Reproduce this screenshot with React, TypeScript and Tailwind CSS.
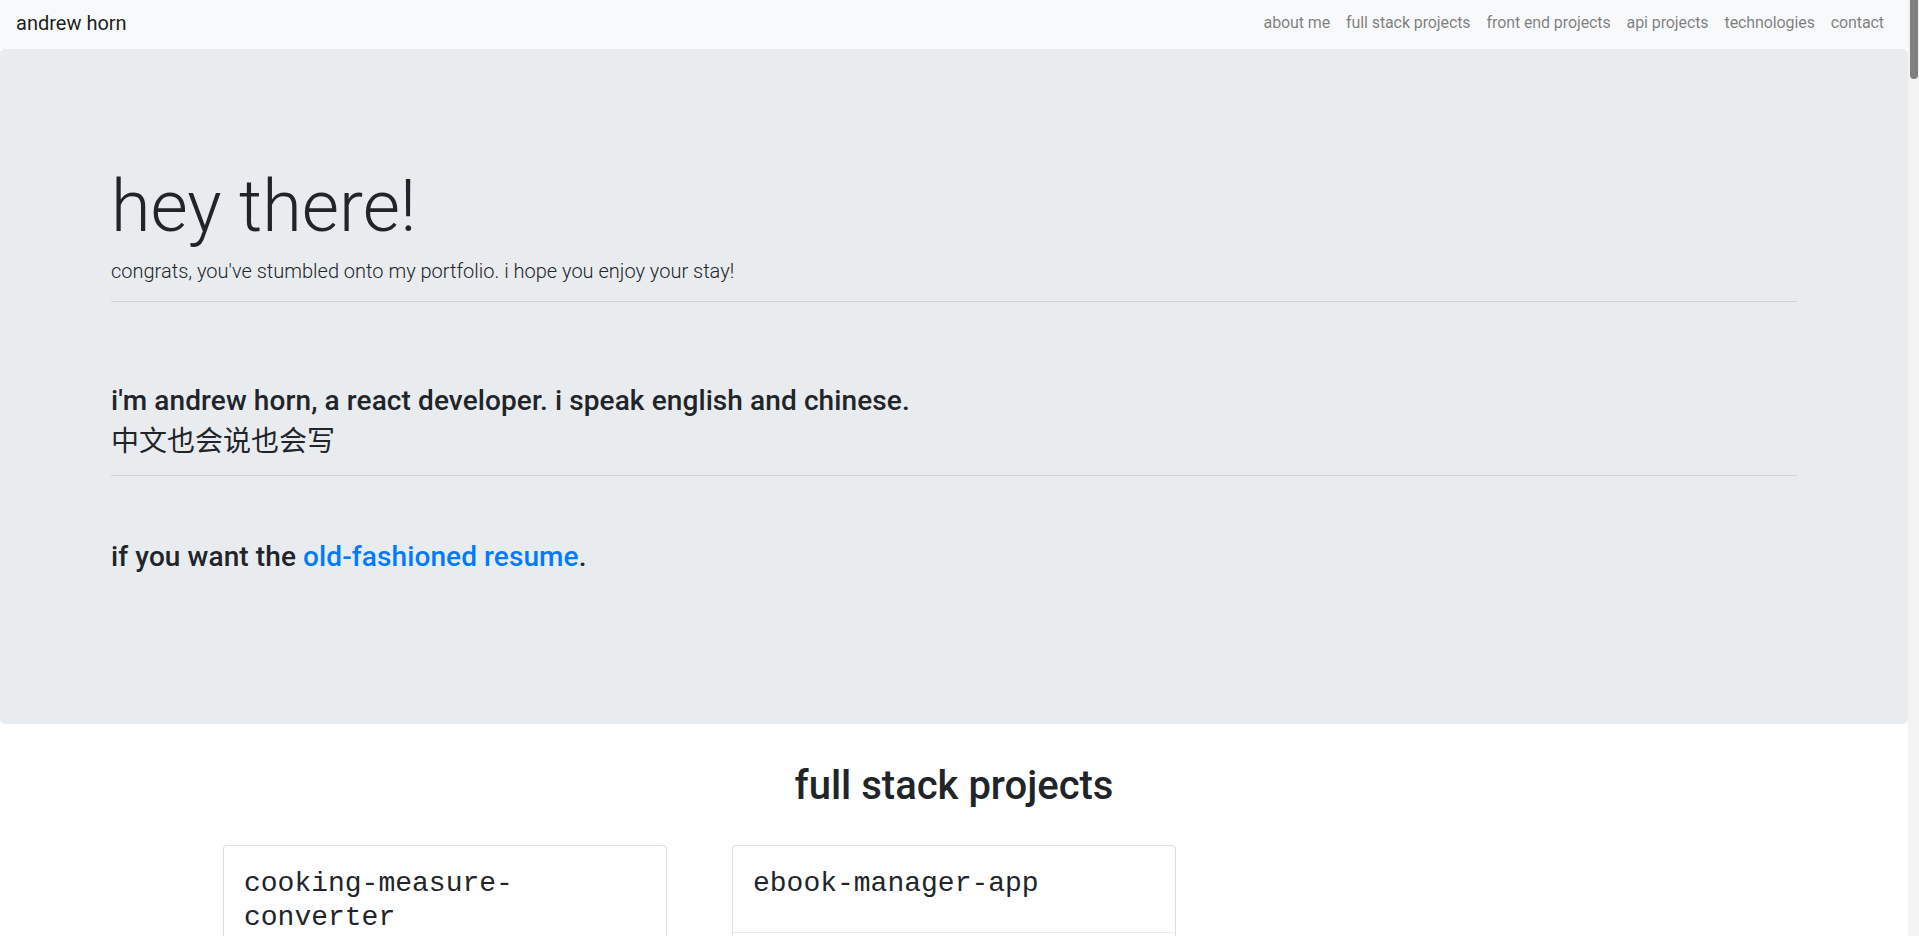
import React from "react";

const links = [
  "about me",
  "full stack projects",
  "front end projects",
  "api projects",
  "technologies",
  "contact",
];

const projects = ["cooking-measure-converter", "ebook-manager-app"];

function Navbar() {
  return (
    <nav className="flex h-[49px] items-center justify-between bg-[#f8f9fa] px-4 pb-[4px]">
      <a href="#" className="text-[20px] leading-[30px] text-black/90">
        andrew horn
      </a>
      <ul className="flex">
        {links.map((l) => (
          <li key={l}>
            <a href="#" className="block px-2 text-base leading-6 tracking-[-0.1px] text-black/50">
              {l}
            </a>
          </li>
        ))}
      </ul>
    </nav>
  );
}

function Jumbotron() {
  return (
    <section className="h-[675px] rounded-[5px] bg-[#e9ecef] pt-[115px]">
      <div className="mx-auto max-w-[1686px]">
        <h1 className="mb-[6px] text-[72px] font-light leading-[1.2]">hey there!</h1>
        <p className="text-[20px] font-light leading-[30px]">
          congrats, you've stumbled onto my portfolio. i hope you enjoy your stay!
        </p>
        <hr className="mt-[15px] border-black/10" />
        <h3 className="mt-[82px] text-[28px] font-medium leading-[1.2] tracking-[0.1px]">
          i'm andrew horn, a react developer. i speak english and chinese.
        </h3>
        <h3 className="mt-[7px] text-[28px] font-normal leading-[1.2]">中文也会说也会写</h3>
        <hr className="mt-[16px] border-black/10" />
        <h3 className="mt-[64px] text-[28px] font-medium leading-[1.2] tracking-[0.1px]">
          if you want the{" "}
          <a href="#" className="text-[#007bff]">
            old-fashioned resume
          </a>
          .
        </h3>
      </div>
    </section>
  );
}

function ProjectCard({ name }: { name: string }) {
  return (
    <div className="flex flex-col rounded-[4px] border border-black/[0.125] bg-white">
      <div className="px-5 pt-[21px] pb-[31px]">
        <h3 className="font-['Liberation_Mono','Courier_New',monospace] text-[28px] leading-[1.2]">
          {name}
        </h3>
      </div>
      <div className="h-[260px] border-t border-black/[0.08]"></div>
    </div>
  );
}

// stand-in for the browser scrollbar seen in the screenshot
function Scrollbar() {
  return (
    <div className="w-[11px] shrink-0 bg-[#f3f3f3]">
      <div className="ml-[2px] h-[79px] w-[8px] rounded-b-[4px] bg-[#808080]"></div>
    </div>
  );
}

export default function App() {
  return (
    <div className="flex h-screen overflow-hidden bg-white font-['Roboto','Noto_Sans_CJK_SC',sans-serif] text-[#212529]">
      <div className="min-w-0 flex-1">
        <Navbar />
        <Jumbotron />
        <section className="pt-[38px]">
          <h1 className="text-center text-[40px] font-medium leading-[1.2]">full stack projects</h1>
          <div className="mx-auto mt-[35px] grid w-[1462px] grid-cols-3 gap-x-[65px] gap-y-10">
            {projects.map((p) => (
              <ProjectCard key={p} name={p} />
            ))}
          </div>
        </section>
      </div>
      <Scrollbar />
    </div>
  );
}
